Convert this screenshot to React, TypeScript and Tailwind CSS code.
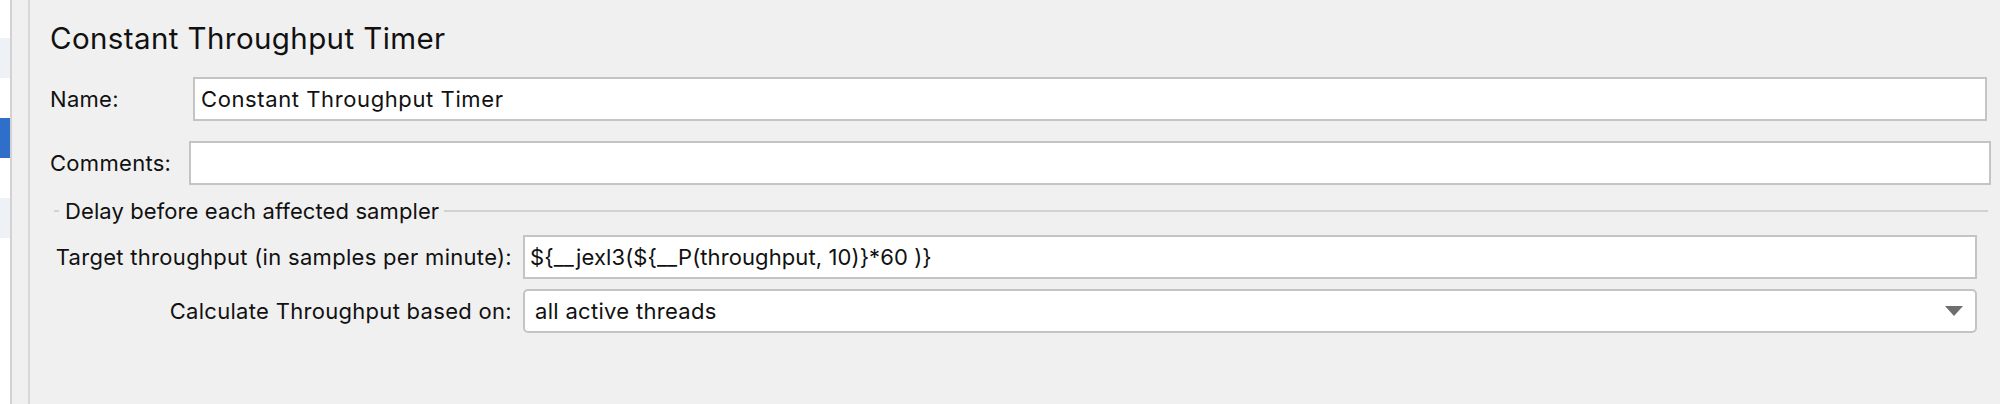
const TREE_ROWS = [
  { h: 'h-[38px]', bg: 'bg-white' },
  { h: 'h-[40px]', bg: 'bg-[#eef1f6]' },
  { h: 'h-[40px]', bg: 'bg-white' },
  { h: 'h-[40px]', bg: 'bg-[#2f6fc9]' },
  { h: 'h-[40px]', bg: 'bg-white' },
  { h: 'h-[40px]', bg: 'bg-[#eef1f6]' },
];

function TreeEdge() {
  return (
    <div className="flex w-[10px] flex-col bg-white">
      {TREE_ROWS.map((r, i) => (
        <div key={i} className={`${r.h} ${r.bg}`} />
      ))}
    </div>
  );
}

function TextField({ value, className }: { value?: string; className: string }) {
  return (
    <div className={`flex h-full flex-1 items-center border-2 border-[#c4c4c4] bg-white ${className}`}>
      {value && <span className="whitespace-pre">{value}</span>}
    </div>
  );
}

export default function App() {
  return (
    <div className="flex h-[404px] w-[2000px] overflow-hidden bg-[#f0f0f0] font-['Inter','Liberation_Sans',sans-serif] text-[22px] tracking-[0.3px] text-[#111]">
      <TreeEdge />
      <div className="w-[2px] bg-[#d2d2d2]" />
      <div className="w-[16px]" />
      <div className="w-[2px] bg-[#d8d8d8]" />

      <main className="flex flex-1 flex-col pl-[20px]">
        <div className="flex h-[77px] items-center">
          <h1 className="text-[29.5px] tracking-[0.4px]">Constant Throughput Timer</h1>
        </div>

        {/* Name */}
        <div className="flex h-[44px] items-center">
          <label className="w-[143px]">Name:</label>
          <TextField value="Constant Throughput Timer" className="mr-[13px] pl-[6px] tracking-[0.6px]" />
        </div>

        {/* Comments */}
        <div className="mt-[20px] flex h-[44px] items-center">
          <label className="w-[139px]">Comments:</label>
          <TextField className="mr-[9px]" />
        </div>

        {/* titled border */}
        <div className="mt-[14px] flex h-[24px] items-center pl-[4px] pr-[12px]">
          <span className="h-[2px] w-[5px] bg-[#d2d2d2]" />
          <span className="ml-[6px] whitespace-nowrap tracking-[0.1px]">Delay before each affected sampler</span>
          <span className="ml-[5px] h-[2px] flex-1 bg-[#d2d2d2]" />
        </div>

        <div className="mt-[12px] flex h-[44px] items-center">
          <label className="w-[473px] pr-[11px] text-right whitespace-nowrap">
            Target throughput (in samples per minute):
          </label>
          <TextField value="${__jexl3(${__P(throughput, 10)}*60 )}" className="mr-[23px] pl-[5px] tracking-[0.1px]" />
        </div>

        <div className="mt-[10px] flex h-[44px] items-center">
          <label className="w-[473px] pr-[11px] text-right whitespace-nowrap">
            Calculate Throughput based on:
          </label>
          <div className="mr-[23px] flex h-full flex-1 items-center justify-between rounded-[5px] border-2 border-[#c4c4c4] bg-white pl-[10px] pr-[12px]">
            <span>all active threads</span>
            <svg width="18" height="10" viewBox="0 0 18 10">
              <polygon points="0,0 18,0 9,10" fill="#6e6e6e" />
            </svg>
          </div>
        </div>
      </main>
    </div>
  );
}
